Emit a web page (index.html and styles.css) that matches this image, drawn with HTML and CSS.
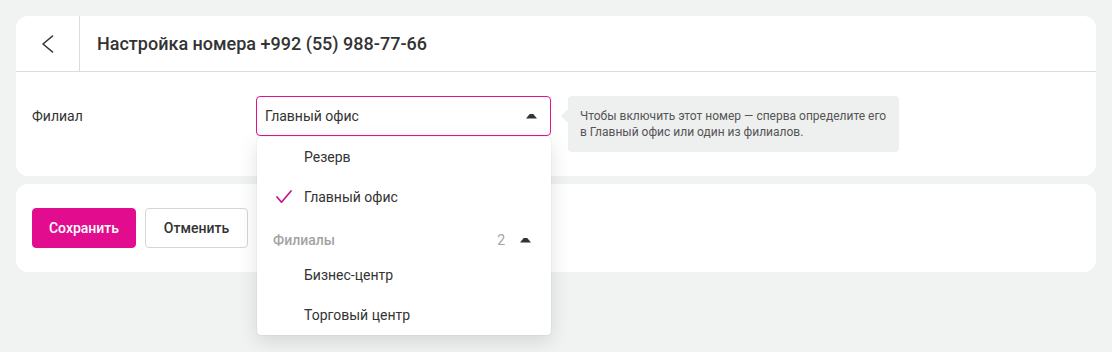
FILE: index.html
```html
<!DOCTYPE html>
<html lang="ru">
<head>
<meta charset="utf-8">
<link rel="stylesheet" href="styles.css">
</head>
<body>
<div class="page">
  <section class="card">
    <header class="card-head">
      <div class="back">
        <svg width="24" height="24" viewBox="0 0 24 24"><path d="M16.5 4 L7 12 L16.5 20" fill="none" stroke="#333" stroke-width="1.6" stroke-linecap="round" stroke-linejoin="round"/></svg>
      </div>
      <h1 class="title">Настройка номера +992 (55) 988-77-66</h1>
    </header>
    <div class="card-body">
      <div class="label">Филиал</div>
      <div class="select-wrap">
        <div class="select">
          <span>Главный офис</span>
          <span class="tri"></span>
        </div>
        <ul class="dropdown">
          <li class="item">Резерв</li>
          <li class="item">
            <svg class="check" width="16" height="14" viewBox="0 0 16 14"><path d="M1 7 L5.5 12.2 L15 1" fill="none" stroke="#c4168c" stroke-width="1.7" stroke-linecap="round" stroke-linejoin="round"/></svg>
            Главный офис
          </li>
          <li class="group">
            <span>Филиалы</span>
            <span class="count">2</span>
            <span class="tri"></span>
          </li>
          <li class="item">Бизнес-центр</li>
          <li class="item">Торговый центр</li>
        </ul>
      </div>
      <div class="hint">Чтобы включить этот номер — сперва определите его в&nbsp;Главный офис или один из филиалов.</div>
    </div>
  </section>
  <section class="card actions">
    <button class="btn primary">Сохранить</button>
    <button class="btn">Отменить</button>
  </section>
</div>
</body>
</html>
```
FILE: styles.css
```css
* { box-sizing: border-box; }
html, body { margin: 0; padding: 0; }
html { background: #f1f2f2; }
body {
  min-height: 352px;
  background: #f1f2f2;
  font-family: Roboto, "Noto Sans", sans-serif;
  color: #333;
  font-size: 14px;
}
.page {
  min-height: 352px;
  padding: 16px;
  display: flex;
  flex-direction: column;
  gap: 8px;
}
.card {
  background: #fff;
  border-radius: 12px;
}
.card-head {
  display: flex;
  align-items: stretch;
  height: 56px;
  border-bottom: 1px solid #dcdcdc;
}
.back {
  width: 64px;
  border-right: 1px solid #dcdcdc;
  display: flex;
  align-items: center;
  justify-content: center;
  padding-left: 1px;
}
.title {
  margin: 0;
  padding-left: 17px;
  font-size: 18px;
  font-weight: 500;
  line-height: 56px;
  color: #333;
  letter-spacing: 0;
}
.card-body {
  display: flex;
  align-items: flex-start;
  padding: 24px 16px 24px 16px;
}
.label {
  width: 224px;
  line-height: 40px;
}
.select-wrap {
  position: relative;
  width: 295px;
}
.select {
  height: 40px;
  border: 1px solid #e0148c;
  border-radius: 4px;
  display: flex;
  align-items: center;
  justify-content: space-between;
  padding: 0 13px 0 8px;
}
.tri {
  width: 11px;
  height: 5px;
  background: #333;
  clip-path: polygon(0 100%, 38% 0, 62% 0, 100% 100%);
  border-radius: 3px 3px 0 0;
}
.dropdown {
  position: absolute;
  top: 41px;
  left: 1px;
  right: 0;
  margin: 0;
  padding: 0;
  list-style: none;
  background: #fff;
  border-radius: 4px;
  box-shadow: 0 0 1px rgba(0,0,0,0.25), 0 6px 20px rgba(0,0,0,0.12);
  z-index: 2;
}
.item {
  height: 40px;
  display: flex;
  align-items: center;
  padding-left: 47px;
  position: relative;
}
.check {
  position: absolute;
  left: 19px;
  top: 13px;
}
.group {
  height: 38px;
  padding: 8px 20px 0 16px;
  display: flex;
  align-items: center;
  color: #a3a3a3;
  font-weight: 500;
}
.group .count {
  margin-left: auto;
  margin-right: 15px;
  font-weight: 400;
}
.hint {
  position: relative;
  margin-left: 17px;
  width: 331px;
  background: #eeefef;
  border-radius: 4px;
  padding: 12px 12px;
  font-size: 12px;
  line-height: 16px;
  color: #555;
}
.hint::before {
  content: "";
  position: absolute;
  left: -7px;
  top: 13px;
  border-top: 7px solid transparent;
  border-bottom: 7px solid transparent;
  border-right: 7px solid #eeefef;
}
.actions {
  padding: 24px 16px;
  display: flex;
  gap: 9px;
}
.btn {
  height: 40px;
  width: 103px;
  border: 1px solid #d6d6d6;
  background: #fff;
  border-radius: 4px;
  font-family: Roboto, "Noto Sans", sans-serif;
  font-size: 14px;
  font-weight: 500;
  color: #333;
  padding: 0;
}
.btn.primary {
  width: 104px;
  background: #e20d8e;
  border-color: #e20d8e;
  color: #fff;
}
```
